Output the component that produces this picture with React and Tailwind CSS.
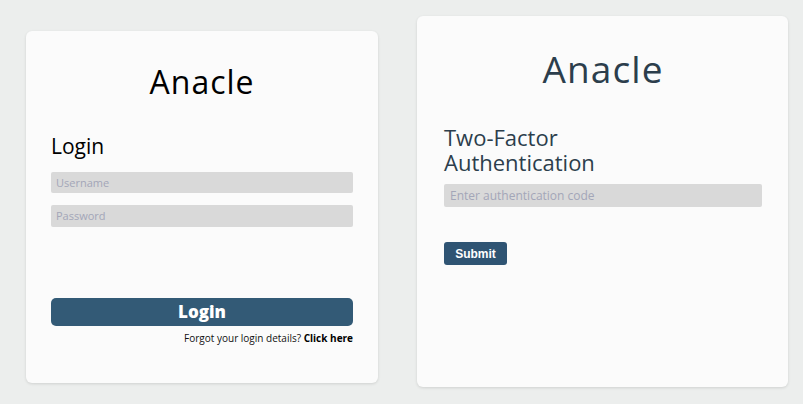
import React from 'react';

const LoginCard = () => (
  <div className="mt-[31px] w-[352px] h-[352px] shrink-0 bg-[#fbfbfb] rounded-[6px] shadow-[0_1px_3px_rgba(0,0,0,0.12)] px-[25px] pt-[32px] flex flex-col">
    <h1 className="text-center text-[32px] leading-[1.2] tracking-[0.03em] text-black">Anacle</h1>
    <h2 className="mt-[33px] text-[21px] leading-[1.2] text-black">Login</h2>
    <input
      type="text"
      placeholder="Username"
      className="mt-[12px] h-[21px] w-full rounded-[2px] bg-[#d9d9d9] px-[5px] text-[11px] text-black placeholder:text-[#a3a6b8] focus:outline-none"
    />
    <input
      type="password"
      placeholder="Password"
      className="mt-[12px] h-[22px] w-full rounded-[2px] bg-[#d9d9d9] px-[5px] text-[11px] text-black placeholder:text-[#a3a6b8] focus:outline-none"
    />
    <button className="mt-[71px] h-[28px] w-full rounded-[5px] bg-[#335a76] text-[17px] font-extrabold text-white">
      Login
    </button>
    <p className="mt-[6px] text-right text-[10px] leading-[1.2] text-[#111]">
      Forgot your login details? <span className="font-bold text-black">Click here</span>
    </p>
  </div>
);

const TwoFactorCard = () => (
  <div className="mt-[16px] w-[371px] h-[371px] shrink-0 bg-[#fbfbfb] rounded-[6px] shadow-[0_1px_3px_rgba(0,0,0,0.12)] pl-[27px] pr-[26px] pt-[31px] flex flex-col items-start">
    <h1 className="w-full text-center text-[37px] leading-[1.2] tracking-[0.03em] text-[#2c3e4c]">Anacle</h1>
    <h2 className="mt-[34px] max-w-[200px] text-[22px] leading-[25px] text-[#2c3e4c]">Two-Factor Authentication</h2>
    <input
      type="text"
      placeholder="Enter authentication code"
      className="mt-[9px] h-[23px] w-full rounded-[2px] bg-[#d9d9d9] px-[6px] text-[12px] text-black placeholder:text-[#a3a6b8] focus:outline-none"
    />
    <button className="mt-[35px] h-[23px] w-[63px] rounded-[3px] bg-[#2f5473] text-[12px] font-bold text-white [font-family:'Liberation_Sans',Arial,sans-serif]">
      Submit
    </button>
  </div>
);

export default function App() {
  return (
    <div className="w-[803px] h-[404px] bg-[#eceeed] overflow-hidden flex items-start gap-[39px] pl-[26px] [font-family:'Open_Sans',Lato,sans-serif]">
      <LoginCard />
      <TwoFactorCard />
    </div>
  );
}
